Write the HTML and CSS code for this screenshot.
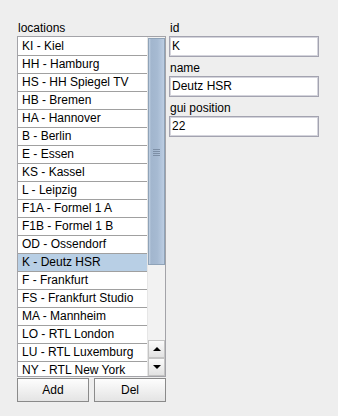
FILE: index.html
```html
<!DOCTYPE html>
<html lang="en">
<head>
    <meta charset="UTF-8">
    <title>Locations</title>
    <link rel="stylesheet" href="styles.css">
</head>
<body>
    <div class="panel">
        <!-- Список локаций -->
        <div class="left">
            <div class="label">locations</div>
            <div class="listbox">
                <div class="rows">
                    <div class="row">KI - Kiel</div>
                    <div class="row">HH - Hamburg</div>
                    <div class="row">HS - HH Spiegel TV</div>
                    <div class="row">HB - Bremen</div>
                    <div class="row">HA - Hannover</div>
                    <div class="row">B - Berlin</div>
                    <div class="row">E - Essen</div>
                    <div class="row">KS - Kassel</div>
                    <div class="row">L - Leipzig</div>
                    <div class="row">F1A - Formel 1 A</div>
                    <div class="row">F1B - Formel 1 B</div>
                    <div class="row">OD - Ossendorf</div>
                    <div class="row selected">K - Deutz HSR</div>
                    <div class="row">F - Frankfurt</div>
                    <div class="row">FS - Frankfurt Studio</div>
                    <div class="row">MA - Mannheim</div>
                    <div class="row">LO - RTL London</div>
                    <div class="row">LU - RTL Luxemburg</div>
                    <div class="row">NY - RTL New York</div>
                </div>
                <div class="scrollbar">
                    <div class="track">
                        <div class="thumb"><span class="grip"></span></div>
                    </div>
                    <div class="arrow up"><span></span></div>
                    <div class="arrow down"><span></span></div>
                </div>
            </div>
            <div class="buttons">
                <button class="btn">Add</button>
                <button class="btn">Del</button>
            </div>
        </div>

        <!-- Поля выбранной локации -->
        <div class="right">
            <div class="label">id</div>
            <div class="field">K</div>
            <div class="label">name</div>
            <div class="field">Deutz HSR</div>
            <div class="label">gui position</div>
            <div class="field">22</div>
        </div>
    </div>
</body>
</html>
```

FILE: styles.css
```css
body {
    background: #eeeeee;
    color: #000;
    font-family: "Liberation Sans", Arial, sans-serif;
    font-size: 12px;
    margin: 0;
    padding: 20px 0 0 17px;
}
.panel {
    display: flex;
    gap: 3px;
}
.left {
    width: 149px;
}
.right {
    width: 150px;
}
.label {
    height: 16px;
    line-height: 16px;
    padding-left: 1px;
}
.listbox {
    display: flex;
    height: 339px;
    border: 1px solid #a3a3a8;
    background: #fff;
    overflow: hidden;
}
.rows {
    flex: 1;
    padding-top: 1px;
}
.row {
    height: 17px;
    line-height: 17px;
    padding-left: 4px;
    border-bottom: 1px solid #a0a0a0;
    white-space: nowrap;
}
.row.selected {
    background: #b8cfe5;
}
.scrollbar {
    width: 17px;
    display: flex;
    flex-direction: column;
    border-left: 1px solid #e6e6e6;
    background: #f2f2f2;
}
.track {
    flex: 1;
}
.thumb {
    height: 225px;
    margin-top: 1px;
    border: 1px solid #8fa3b8;
    background: linear-gradient(to right, #c4d4e6 0, #a2b6ce 2px, #a6bad2 55%, #bccde2 100%);
    display: flex;
    align-items: center;
    justify-content: center;
}
.grip {
    width: 7px;
    height: 7px;
    background: repeating-linear-gradient(to bottom, #7d8fa6 0, #7d8fa6 1px, transparent 1px, transparent 2px);
    margin-top: 2px;
}
.arrow {
    height: 16px;
    border: 1px solid #c4c4c4;
    background: linear-gradient(to bottom, #fbfbfb, #e2e2e2);
    display: flex;
    align-items: center;
    justify-content: center;
}
.arrow span {
    width: 0;
    height: 0;
    border-left: 4px solid transparent;
    border-right: 4px solid transparent;
}
.arrow.up span {
    border-bottom: 4px solid #000;
}
.arrow.down span {
    border-top: 4px solid #000;
}
.buttons {
    display: flex;
    gap: 5px;
    margin-top: 1px;
}
.btn {
    width: 72px;
    height: 24px;
    padding: 0;
    font-family: "Liberation Sans", Arial, sans-serif;
    font-size: 12px;
    color: #000;
    border: 1px solid #8a8a8a;
    background: linear-gradient(to bottom, #fdfdfd, #e4e4e4);
}
.field {
    height: 19px;
    line-height: 19px;
    padding-left: 2px;
    border: 1px solid #a3a3b0;
    box-shadow: inset 0 0 0 1px #d4d4dc;
    background: #fff;
    margin-bottom: 3px;
}
```
